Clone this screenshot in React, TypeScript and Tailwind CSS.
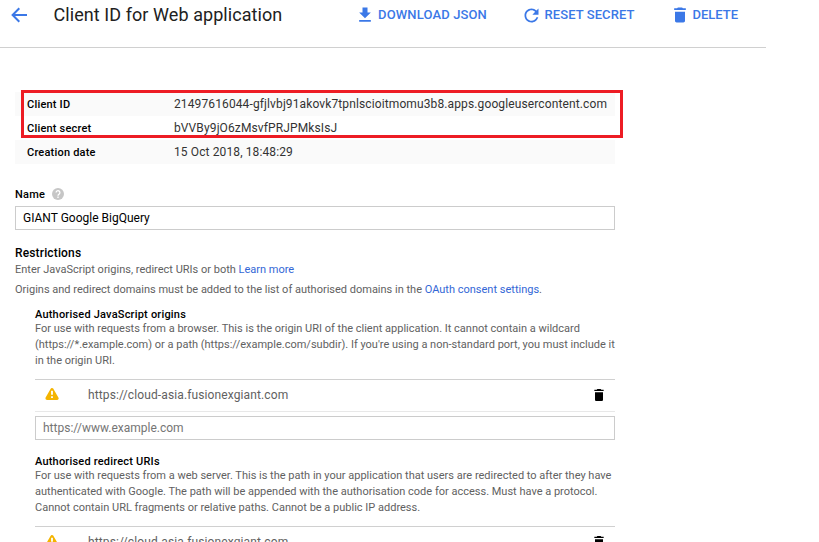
import type { ReactNode } from 'react';

function Icon({ d, className }: { d: string; className: string }) {
  return (
    <svg viewBox="0 0 24 24" fill="currentColor" className={`shrink-0 ${className}`}>
      <path d={d} />
    </svg>
  );
}

const DOWNLOAD = 'M19 9h-4V3H9v6H5l7 7 7-7zM5 18v2h14v-2H5z';
const REFRESH =
  'M17.65 6.35C16.2 4.9 14.21 4 12 4c-4.42 0-7.99 3.58-7.99 8s3.57 8 7.99 8c3.73 0 6.84-2.55 7.73-6h-2.08c-.82 2.33-3.04 4-5.65 4-3.31 0-6-2.69-6-6s2.69-6 6-6c1.66 0 3.14.69 4.22 1.78L13 11h7V4l-2.35 2.35z';
const TRASH = 'M6 19c0 1.1.9 2 2 2h8c1.1 0 2-.9 2-2V8H6v11zM19 4h-3.5l-1-1h-5l-1 1H5v2h14V4z';

function Action({ icon, children, className, iconClass }: { icon: string; children: ReactNode; className: string; iconClass: string }) {
  return (
    <button className={`flex items-center text-[13px] leading-5 font-medium whitespace-nowrap text-[#3b78e7] ${className}`}>
      <Icon d={icon} className={iconClass} />
      {children}
    </button>
  );
}

function DetailRow({ label, value, className }: { label: string; value: string; className: string }) {
  return (
    <div className={`flex h-6 items-center pl-3 ${className}`}>
      <span className="w-[147px] pt-[2px] text-[11px] leading-4 font-medium tracking-[0.2px] text-black">{label}</span>
      <span className="text-[12px] tracking-[0.118px] whitespace-nowrap text-[#333]">{value}</span>
    </div>
  );
}

function UriSection({ title, lines, uri }: { title: string; lines: string[]; uri: string }) {
  return (
    <section className="ml-5 h-[147px] shrink-0">
      <h3 className="pt-px text-[11px] leading-[13px] font-medium tracking-[0.2px] text-black">{title}</h3>
      <p className="text-[11px] leading-4 whitespace-nowrap text-[#616161]">
        {lines.map((line) => (
          <span key={line} className="block">{line}</span>
        ))}
      </p>
      <div className="mt-[10px] flex h-[33px] items-center border-t border-b border-t-[#d0d0d0] border-b-[#e8e8e8] pr-2 pb-[2px] pl-[10px]">
        <svg viewBox="0 0 14 12" className="mb-[2px] h-3 w-[14px] shrink-0">
          <path d="M7 1.8 11.9 10.3H2.1Z" fill="#f4b400" stroke="#f4b400" strokeWidth="3.4" strokeLinejoin="round" />
          <path d="M6.1 2.8h1.8v4H6.1zM6.1 8.2h1.8v1.7H6.1z" fill="white" />
        </svg>
        <span className="ml-[29px] flex-1 text-[12px] tracking-[0.118px] text-[#616161]">{uri}</span>
        <Icon d={TRASH} className="size-4 text-black" />
      </div>
      <div className="mt-1 flex h-6 items-center border border-[#ccc] px-[7px] text-[12px] text-[#757575]">
        https://www.example.com
      </div>
    </section>
  );
}

export default function App() {
  return (
    <main className="h-[542px] w-[819px] overflow-hidden bg-white font-['Roboto',sans-serif]">
      <header className="flex h-12 w-[766px] items-start border-b border-[#d0d0d0] pt-[5px] pl-[9px]">
        <svg viewBox="0 0 22 20" className="h-5 w-[22px] shrink-0 text-[#3b78e7]" fill="none" stroke="currentColor" strokeWidth="2">
          <path d="M10.3 3.3 3.6 10l6.7 6.7M3.5 10H18" />
        </svg>
        <h1 className="ml-[22.5px] w-[301.5px] text-[18px] leading-5 tracking-[0.07px] whitespace-nowrap text-[#212121]">Client ID for Web application</h1>
        <Action icon={DOWNLOAD} iconClass="mr-[3px] size-5" className="w-[166.5px] tracking-[0.14px]">DOWNLOAD JSON</Action>
        <Action icon={REFRESH} iconClass="mr-[3px] -my-px -ml-px size-[21px]" className="h-5 w-[148.5px] tracking-[0.08px]">RESET SECRET</Action>
        <Action icon={TRASH} iconClass="mr-[2.5px] size-5" className="">DELETE</Action>
      </header>

      <div className="ml-[15px] flex w-[600px] flex-col pt-[44px]">
        <div className="relative">
          <DetailRow label="Client ID" value="21497616044-gfjlvbj91akovk7tpnlscioitmomu3b8.apps.googleusercontent.com" className="bg-[#fafafa]" />
          <DetailRow label="Client secret" value="bVVBy9jO6zMsvfPRJPMksIsJ" className="" />
          <DetailRow label="Creation date" value="15 Oct 2018, 18:48:29" className="bg-[#fafafa]" />
          <div className="absolute -top-[2px] left-[6px] h-12 w-[602px] border-[3px] border-[#ed1c24]" />
        </div>

        <div className="mt-[22px] flex h-4 items-center gap-[7px] text-[11px] font-medium text-black">
          <span className="pt-[2px] leading-4 tracking-[0.2px]">Name</span>
          <svg viewBox="0 0 12 12" className="size-3 shrink-0" fill="none">
            <circle cx="6" cy="6" r="6" fill="#c6c6c6" />
            <path d="M4.1 4.6a1.9 1.9 0 1 1 3.1 1.4C6.4 6.6 6 6.9 6 7.7M6 8.5v1.4" stroke="white" strokeWidth="1.3" />
          </svg>
        </div>
        <div className="mt-1 flex h-6 items-center border border-[#ccc] px-[7px] text-[12px] text-black">GIANT Google BigQuery</div>

        <h2 className="mt-[15px] text-[12px] leading-4 font-medium tracking-[0.15px] text-black">Restrictions</h2>
        <p className="mt-px text-[11px] leading-4 whitespace-nowrap text-[#616161]">
          Enter JavaScript origins, redirect URIs or both <a className="text-[#3367d6]">Learn more</a>
        </p>
        <p className="mt-1 mb-[9px] text-[11px] leading-4 whitespace-nowrap text-[#616161]">
          Origins and redirect domains must be added to the list of authorised domains in the{' '}
          <a className="text-[#3367d6]">OAuth consent settings</a>.
        </p>

        <UriSection
          title="Authorised JavaScript origins"
          lines={[
            'For use with requests from a browser. This is the origin URI of the client application. It cannot contain a wildcard',
            "(https://*.example.com) or a path (https://example.com/subdir). If you're using a non-standard port, you must include it",
            'in the origin URI.',
          ]}
          uri="https://cloud-asia.fusionexgiant.com"
        />
        <UriSection
          title="Authorised redirect URIs"
          lines={[
            'For use with requests from a web server. This is the path in your application that users are redirected to after they have',
            'authenticated with Google. The path will be appended with the authorisation code for access. Must have a protocol.',
            'Cannot contain URL fragments or relative paths. Cannot be a public IP address.',
          ]}
          uri="https://cloud-asia.fusionexgiant.com"
        />
      </div>
    </main>
  );
}
